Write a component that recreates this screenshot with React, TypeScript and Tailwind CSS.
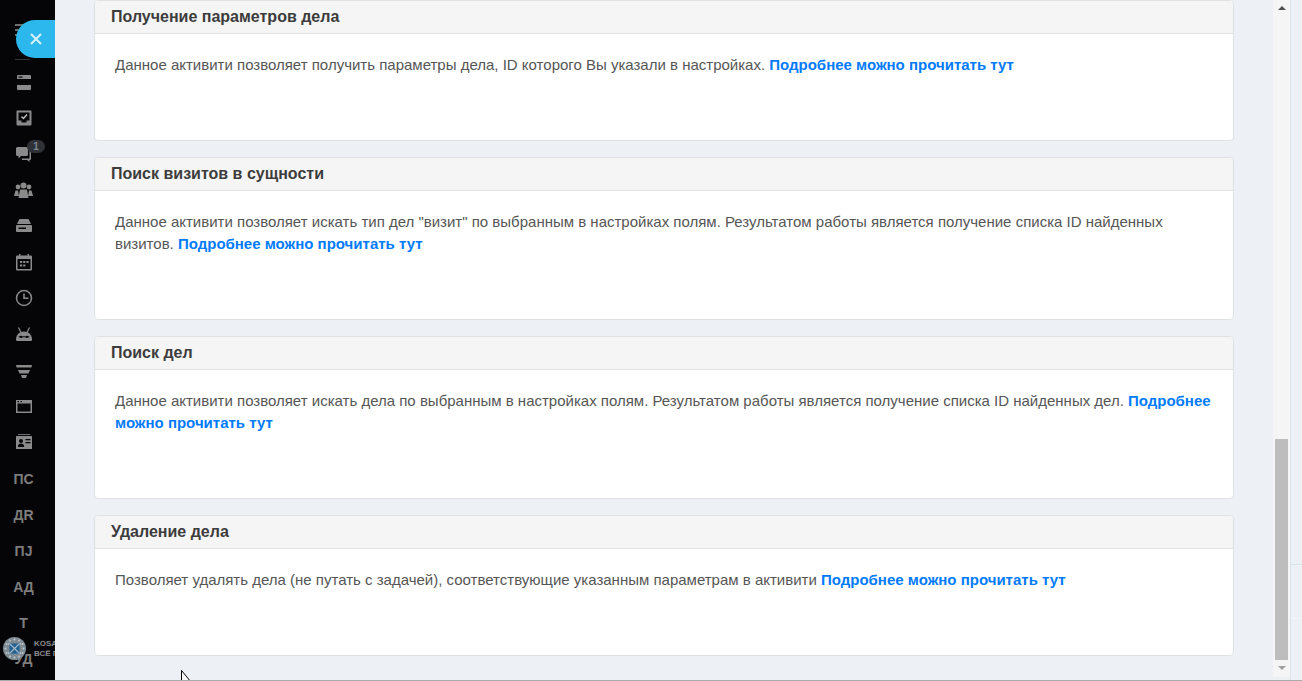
import React from "react";

const cards = [
  {
    title: "Получение параметров дела",
    text: "Данное активити позволяет получить параметры дела, ID которого Вы указали в настройках. ",
  },
  {
    title: "Поиск визитов в сущности",
    text: 'Данное активити позволяет искать тип дел "визит" по выбранным в настройках полям. Результатом работы является получение списка ID найденных визитов. ',
  },
  {
    title: "Поиск дел",
    text: "Данное активити позволяет искать дела по выбранным в настройках полям. Результатом работы является получение списка ID найденных дел. ",
  },
  {
    title: "Удаление дела",
    text: "Позволяет удалять дела (не путать с задачей), соответствующие указанным параметрам в активити ",
  },
];

const GRAY = "#8a8a8a";
const DARK = "#050507";

function SvgIcon({ children }: { children: React.ReactNode }) {
  return (
    <svg width="18" height="18" viewBox="0 0 18 18" fill={GRAY}>
      {children}
    </svg>
  );
}

const icons: React.ReactNode[] = [
  <SvgIcon key="panel">
    <rect x="2" y="2" width="14" height="15" rx="1" />
    <rect x="3.500" y="3.500" width="4" height="1.200" fill={DARK} />
    <rect x="2" y="6" width="14" height="6" fill={DARK} />
  </SvgIcon>,
  <SvgIcon key="inbox">
    <rect x="1.500" y="1.500" width="15" height="15" rx="1" />
    <path d="M3.500 3.500h11v8h-3v2h-5v-2h-3z" fill={DARK} />
    <path d="M6.500 7.500l2 2 3.500-4" stroke="#c4c4c4" strokeWidth="1.400" fill="none" />
  </SvgIcon>,
  <SvgIcon key="comments">
    <path d="M2.500 2h9a1.500 1.500 0 0 1 1.500 1.500v6a1.500 1.500 0 0 1-1.500 1.500H6l-2.500 2.500V11h-1A1.500 1.500 0 0 1 1 9.500v-6A1.500 1.500 0 0 1 2.500 2z" />
    <path d="M14.500 6h1.500v8a1 1 0 0 1-1 1h-.5v2l-2.500-2H7v-1.500h7.500z" />
  </SvgIcon>,
  <svg key="users" width="21" height="18" viewBox="0 0 21 18" fill={GRAY}>
    <circle cx="5" cy="6" r="2.400" />
    <circle cx="10.500" cy="4.500" r="3" />
    <circle cx="16" cy="6" r="2.400" />
    <path d="M1 15l1.500-5.500h2.500L6 15z" />
    <path d="M15 15l1-5.500h2.500L20 15z" />
    <path d="M5.500 17l1.500-8.500h7L15.500 17z" />
  </svg>,
  <SvgIcon key="drive">
    <path d="M4.500 2h9l2.500 5H2z" />
    <rect x="1" y="8" width="16" height="7" rx="1" />
    <rect x="3.500" y="10.500" width="7.500" height="1.500" fill={DARK} />
  </SvgIcon>,
  <SvgIcon key="calendar">
    <rect x="1" y="2.500" width="16" height="15" rx="1" />
    <rect x="4" y="1" width="1.500" height="3" />
    <rect x="12.500" y="1" width="1.500" height="3" />
    <rect x="2.500" y="6" width="13" height="10" fill={DARK} />
    <rect x="5" y="8" width="2.200" height="2" />
    <rect x="8.200" y="8" width="2.200" height="2" />
    <rect x="11.400" y="8" width="2.200" height="2" />
    <rect x="5" y="11.500" width="2.200" height="2" />
    <rect x="8.200" y="11.500" width="2.200" height="2" />
  </SvgIcon>,
  <SvgIcon key="clock">
    <circle cx="9" cy="9" r="7.500" fill="none" stroke={GRAY} strokeWidth="1.500" />
    <path d="M8.200 4.500h1.600v4h3.700v1.600H8.200z" />
  </SvgIcon>,
  <SvgIcon key="android">
    <path d="M1 14.500C1 9.500 4.500 6.500 9 6.500s8 3 8 8c0 1-.5 1.500-1.500 1.500h-13C1.500 16 1 15.500 1 14.500z" />
    <path d="M3.500 2.500L6 7.500M14.500 2.500L12 7.500" stroke={GRAY} strokeWidth="1.300" />
    <rect x="3.500" y="11" width="11" height="1.600" rx="0.800" fill="#3a3a3c" />
    <ellipse cx="6" cy="11.800" rx="1.500" ry="1.100" fill={DARK} />
    <ellipse cx="12" cy="11.800" rx="1.500" ry="1.100" fill={DARK} />
  </SvgIcon>,
  <SvgIcon key="funnel">
    <path d="M1 4h16l-.6 2.500H1.600z" />
    <path d="M3 9h12l-1.500 3.500h-9z" />
    <path d="M6 14h6l-1 3H7z" />
  </SvgIcon>,
  <SvgIcon key="window">
    <rect x="1" y="3" width="16" height="13" />
    <rect x="2.500" y="6.500" width="13" height="8" fill={DARK} />
    <rect x="2.500" y="4" width="1.500" height="1.200" fill={DARK} />
    <rect x="5.500" y="4" width="1.500" height="1.200" fill={DARK} />
  </SvgIcon>,
  <SvgIcon key="card">
    <rect x="3" y="1" width="12" height="0.800" />
    <rect x="1" y="3" width="16" height="13" rx="0.500" />
    <circle cx="6" cy="8" r="2" fill={DARK} />
    <path d="M2.800 14c0-2.500 1.500-3.500 3.200-3.500s3.200 1 3.200 3.500z" fill={DARK} />
    <rect x="10.500" y="6" width="5" height="1.300" fill={DARK} />
    <rect x="10.500" y="9" width="5" height="1.300" fill={DARK} />
  </SvgIcon>,
];

const shortNames = ["ПС", "ДR", "ПJ", "АД", "Т", "УД"];

const logoDots = [
  [11.5, 2.5], [7, 3.5], [16, 3.5], [3.5, 7], [19.5, 7], [2.5, 11.5], [20.5, 11.5],
  [3.5, 16], [19.5, 16], [7, 19.5], [16, 19.5], [11.5, 20.5], [6, 7], [17, 7], [6, 16], [17, 16],
];

export default function App() {
  return (
    <div className="relative flex h-[681px] w-[1302px] overflow-hidden border-b border-[#a9a9a9] bg-[#edf1f5] font-['Liberation_Sans',Arial,sans-serif]">
      <aside className="flex w-[55px] shrink-0 flex-col items-center bg-[#050507] pt-[64px] pr-[8px]">
        {icons.map((icon, i) => (
          <div key={i} className="relative flex h-[36px] w-full items-center justify-center">
            {icon}
            {i === 2 && (
              <span className="absolute left-[27px] top-[4px] flex h-[13px] w-[18px] items-center justify-center rounded-full bg-[#2f3136] text-[10px] font-bold text-[#7d8794]">
                1
              </span>
            )}
          </div>
        ))}
        {shortNames.map((name) => (
          <div key={name} className="flex h-[36px] w-full items-center justify-center pt-[2px] text-[14px] font-bold text-[#7d7d7d]">
            {name}
          </div>
        ))}
      </aside>

      {/* hamburger and its divider, mostly hidden by the round button */}
      <div className="absolute left-[15px] top-[24px] flex w-[16px] flex-col gap-[3px]">
        <div className="h-[2px] bg-[#6e6e6e]" />
        <div className="h-[2px] bg-[#6e6e6e]" />
        <div className="h-[2px] bg-[#6e6e6e]" />
      </div>
      <div className="absolute left-[15px] top-[59px] h-px w-[15px] bg-[#333333]" />

      <button className="absolute left-[16px] top-[20px] flex h-[38px] w-[39px] items-center justify-center rounded-l-[19px] bg-[#2cb8ec] pl-[1px]">
        <svg width="14" height="14" viewBox="0 0 14 14">
          <path d="M2 2l10 10M12 2L2 12" stroke="#d6f1fb" strokeWidth="2" />
        </svg>
      </button>

      <div className="absolute left-[3px] top-[637px] flex w-[52px] items-center gap-[8px] overflow-hidden">
        <svg width="23" height="23" viewBox="0 0 23 23" className="shrink-0">
          <circle cx="11.500" cy="11.500" r="11.500" fill="#7f8b93" />
          {logoDots.map(([cx, cy]) => (
            <circle key={`${cx}-${cy}`} cx={cx} cy={cy} r="0.900" fill="#c5ccd1" />
          ))}
          <rect x="6.500" y="6.500" width="10" height="10" fill="#1f5f92" />
          <path d="M7 7l9 9M16 7l-9 9" stroke="#a5b8c6" strokeWidth="1.300" />
        </svg>
        <div className="whitespace-nowrap text-[8px] font-bold leading-[10px] text-[#8a8a8a]">
          KOSA
          <br />
          ВСЁ П
        </div>
      </div>

      <main className="flex w-[1218px] shrink-0 flex-col gap-[16px] px-[39px]">
        {cards.map((card) => (
          <section key={card.title} className="overflow-hidden rounded-[4px] border border-[#dfe2e5] bg-white">
            <h3 className="h-[33px] border-b border-[#dfe2e5] bg-[#f5f5f5] pl-[16px] text-[16px] leading-[32px] font-bold text-[#3c3c3c]">
              {card.title}
            </h3>
            <div className="px-[20px] pt-[20px] pb-[64px] text-[15px] leading-[22px] text-[#565656]">
              {card.text}
              <a className="font-bold text-[#007bff]">Подробнее можно прочитать тут</a>
            </div>
          </section>
        ))}
      </main>

      <div className="flex h-[677px] w-[17px] shrink-0 flex-col items-center bg-[#f5f5f5] pt-[6px] pb-[7px]">
        <div className="h-0 w-0 border-x-[4px] border-b-[4px] border-x-transparent border-b-[#505050]" />
        <div className="mt-auto h-[221px] w-[13px] bg-[#bdbdbd]" />
        <div className="mt-[6px] h-0 w-0 border-x-[4px] border-t-[4px] border-x-transparent border-t-[#a0a0a0]" />
      </div>

      <div className="flex flex-1 flex-col border-l border-[#dde5ec] pt-[564px]">
        <div className="h-px bg-[#d9e3ec]" />
        <div className="mt-[53px] h-px bg-[#f3f5f7]" />
      </div>

      {/* mouse pointer caught by the screenshot */}
      <svg className="absolute left-[181px] top-[670px]" width="12" height="18" viewBox="0 0 12 18">
        <path d="M0.500 0.500v15l3.500-3.500h6z" fill="#ffffff" stroke="#000000" strokeWidth="1" />
      </svg>
    </div>
  );
}
